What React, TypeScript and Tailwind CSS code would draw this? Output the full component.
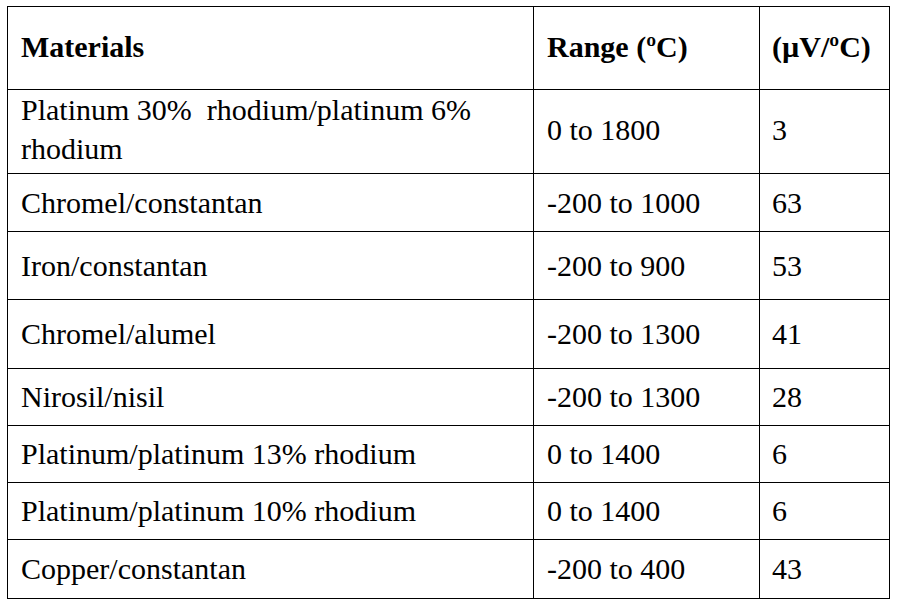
import React from "react";

const rows: { m: React.ReactNode; r: string; v: string; h: string; pb: string }[] = [
  { m: <>Platinum 30%&nbsp; rhodium/platinum 6% rhodium</>, r: "0 to 1800", v: "3", h: "h-[84px]", pb: "pb-[5px]" },
  { m: "Chromel/constantan", r: "-200 to 1000", v: "63", h: "h-[58px]", pb: "pb-[1px]" },
  { m: "Iron/constantan", r: "-200 to 900", v: "53", h: "h-[68px]", pb: "pb-[1px]" },
  { m: "Chromel/alumel", r: "-200 to 1300", v: "41", h: "h-[69px]", pb: "pb-[1px]" },
  { m: "Nirosil/nisil", r: "-200 to 1300", v: "28", h: "h-[57px]", pb: "pb-[1px]" },
  { m: "Platinum/platinum 13% rhodium", r: "0 to 1400", v: "6", h: "h-[57px]", pb: "pb-[1px]" },
  { m: "Platinum/platinum 10% rhodium", r: "0 to 1400", v: "6", h: "h-[57px]", pb: "pb-[1px]" },
  { m: "Copper/constantan", r: "-200 to 400", v: "43", h: "h-[59px]", pb: "pb-[1px]" },
];

export default function App() {
  return (
    <div className="w-[900px] h-[603px] bg-white pt-[6px] pl-[7px] overflow-hidden font-['Liberation_Serif','Times_New_Roman',serif]">
      <table className="table-fixed border-collapse w-[882px] text-black text-[30px] leading-[39px] font-['Liberation_Serif','Times_New_Roman',serif]">
        <colgroup>
          <col className="w-[526px]" />
          <col className="w-[226px]" />
          <col className="w-[130px]" />
        </colgroup>
        <thead>
          <tr className="h-[83px]">
            <th className="border border-black pl-[13px] pr-[13px] pb-[3px] text-left font-bold align-middle">Materials</th>
            <th className="border border-black pl-[13px] pr-[13px] pb-[3px] text-left font-bold align-middle">Range (ºC)</th>
            <th className="border border-black pl-[12px] pr-[8px] pb-[3px] text-left font-bold align-middle">(µV/ºC)</th>
          </tr>
        </thead>
        <tbody>
          {rows.map((row, i) => (
            <tr key={i} className={row.h}>
              <td className={`border border-black pl-[13px] pr-[40px] align-middle ${row.pb}`}>{row.m}</td>
              <td className={`border border-black pl-[13px] pr-[13px] align-middle ${row.pb}`}>{row.r}</td>
              <td className={`border border-black pl-[12px] pr-[8px] align-middle ${row.pb}`}>{row.v}</td>
            </tr>
          ))}
        </tbody>
      </table>
    </div>
  );
}
